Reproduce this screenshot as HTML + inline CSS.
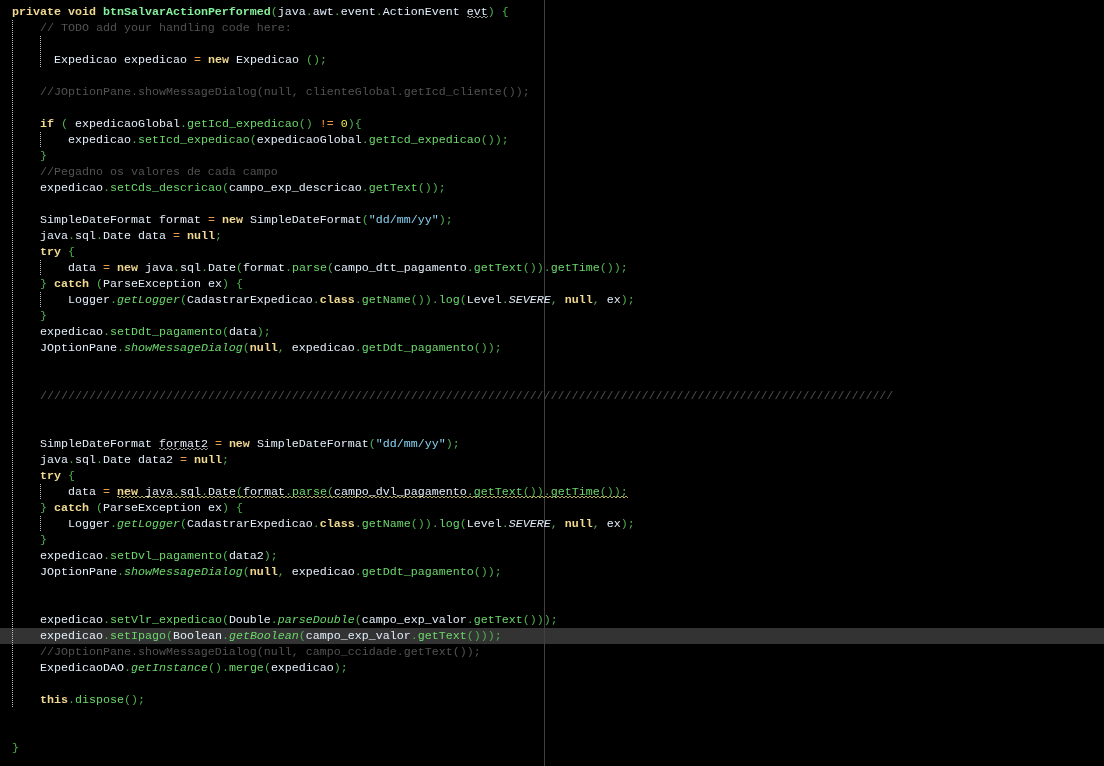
<!DOCTYPE html>
<html><head><meta charset="utf-8">
<style>
html,body{margin:0;padding:0;background:#000;width:1104px;height:766px;overflow:hidden}
#ed{position:absolute;left:0;top:0;width:1104px;height:766px;}
#txt{position:absolute;left:0;top:0;width:1104px;height:766px;will-change:transform}
.l{position:absolute;left:12px;height:16px;line-height:16px;white-space:pre;font-family:"Liberation Mono",monospace;font-size:11.667px;color:#e2eefa}
.k{color:#f0d890;font-weight:bold}
.m{color:#84f09c;font-weight:bold}
.p{color:#4fb04f}
.o{color:#e89a4c}
.i{color:#e2eefa}
.f{color:#6cd86c}
.fi{color:#6cd86c;font-style:italic}
.ii{color:#e2eefa;font-style:italic}
.c{color:#525252}
.s{color:#88d4f4}
.n{color:#eeee50}
#margin{position:absolute;left:544px;top:0;width:1px;height:766px;background:#404040}
#cur{position:absolute;left:0;top:628px;width:1104px;height:16px;background:#333333}
.g{position:absolute;width:1px;background:repeating-linear-gradient(to bottom,#c0c0c0 0,#c0c0c0 1px,transparent 1px,transparent 2px)}
.w{position:absolute;height:2px;background:repeating-linear-gradient(to right,var(--c) 0,var(--c) 2px,transparent 2px,transparent 4px),repeating-linear-gradient(to right,transparent 0,transparent 2px,var(--c) 2px,var(--c) 4px);background-size:100% 1px,100% 1px;background-position:0 0,0 1px;background-repeat:no-repeat}
</style></head><body><div id="ed">
<div id="cur"></div>
<div id="margin"></div>
<div class="g" style="left:12px;top:20px;height:688px"></div>
<div class="g" style="left:40px;top:36px;height:32px"></div>
<div class="g" style="left:40px;top:132px;height:16px"></div>
<div class="g" style="left:40px;top:260px;height:16px"></div>
<div class="g" style="left:40px;top:292px;height:16px"></div>
<div class="g" style="left:40px;top:484px;height:16px"></div>
<div class="g" style="left:40px;top:516px;height:16px"></div>
<div class="w" style="--c:#909090;left:467px;top:16px;width:21px"></div>
<div class="w" style="--c:#909090;left:159px;top:448px;width:49px"></div>
<div class="w" style="--c:#b8b050;left:117px;top:496px;width:511px"></div>
<div id="txt">
<div class="l" style="top:4px"><span class="k">private</span> <span class="k">void</span> <span class="m">btnSalvarActionPerformed</span><span class="p">(</span><span class="i">java</span><span class="p">.</span><span class="i">awt</span><span class="p">.</span><span class="i">event</span><span class="p">.</span><span class="i">ActionEvent</span> <span class="i">evt</span><span class="p">)</span> <span class="p">{</span></div>
<div class="l" style="top:20px">    <span class="c">// TODO add your handling code here:</span></div>
<div class="l" style="top:36px"></div>
<div class="l" style="top:52px">      <span class="i">Expedicao</span> <span class="i">expedicao</span> <span class="o">=</span> <span class="k">new</span> <span class="i">Expedicao</span> <span class="p">(</span><span class="p">)</span><span class="p">;</span></div>
<div class="l" style="top:68px"></div>
<div class="l" style="top:84px">    <span class="c">//JOptionPane.showMessageDialog(null, clienteGlobal.getIcd_cliente());</span></div>
<div class="l" style="top:100px"></div>
<div class="l" style="top:116px">    <span class="k">if</span> <span class="p">(</span> <span class="i">expedicaoGlobal</span><span class="p">.</span><span class="f">getIcd_expedicao</span><span class="p">(</span><span class="p">)</span> <span class="o">!=</span> <span class="n">0</span><span class="p">)</span><span class="p">{</span></div>
<div class="l" style="top:132px">        <span class="i">expedicao</span><span class="p">.</span><span class="f">setIcd_expedicao</span><span class="p">(</span><span class="i">expedicaoGlobal</span><span class="p">.</span><span class="f">getIcd_expedicao</span><span class="p">(</span><span class="p">)</span><span class="p">)</span><span class="p">;</span></div>
<div class="l" style="top:148px">    <span class="p">}</span></div>
<div class="l" style="top:164px">    <span class="c">//Pegadno os valores de cada campo</span></div>
<div class="l" style="top:180px">    <span class="i">expedicao</span><span class="p">.</span><span class="f">setCds_descricao</span><span class="p">(</span><span class="i">campo_exp_descricao</span><span class="p">.</span><span class="f">getText</span><span class="p">(</span><span class="p">)</span><span class="p">)</span><span class="p">;</span></div>
<div class="l" style="top:196px"></div>
<div class="l" style="top:212px">    <span class="i">SimpleDateFormat</span> <span class="i">format</span> <span class="o">=</span> <span class="k">new</span> <span class="i">SimpleDateFormat</span><span class="p">(</span><span class="s">&quot;dd/mm/yy&quot;</span><span class="p">)</span><span class="p">;</span></div>
<div class="l" style="top:228px">    <span class="i">java</span><span class="p">.</span><span class="i">sql</span><span class="p">.</span><span class="i">Date</span> <span class="i">data</span> <span class="o">=</span> <span class="k">null</span><span class="p">;</span></div>
<div class="l" style="top:244px">    <span class="k">try</span> <span class="p">{</span></div>
<div class="l" style="top:260px">        <span class="i">data</span> <span class="o">=</span> <span class="k">new</span> <span class="i">java</span><span class="p">.</span><span class="i">sql</span><span class="p">.</span><span class="i">Date</span><span class="p">(</span><span class="i">format</span><span class="p">.</span><span class="f">parse</span><span class="p">(</span><span class="i">campo_dtt_pagamento</span><span class="p">.</span><span class="f">getText</span><span class="p">(</span><span class="p">)</span><span class="p">)</span><span class="p">.</span><span class="f">getTime</span><span class="p">(</span><span class="p">)</span><span class="p">)</span><span class="p">;</span></div>
<div class="l" style="top:276px">    <span class="p">}</span> <span class="k">catch</span> <span class="p">(</span><span class="i">ParseException</span> <span class="i">ex</span><span class="p">)</span> <span class="p">{</span></div>
<div class="l" style="top:292px">        <span class="i">Logger</span><span class="p">.</span><span class="fi">getLogger</span><span class="p">(</span><span class="i">CadastrarExpedicao</span><span class="p">.</span><span class="k">class</span><span class="p">.</span><span class="f">getName</span><span class="p">(</span><span class="p">)</span><span class="p">)</span><span class="p">.</span><span class="f">log</span><span class="p">(</span><span class="i">Level</span><span class="p">.</span><span class="ii">SEVERE</span><span class="p">,</span> <span class="k">null</span><span class="p">,</span> <span class="i">ex</span><span class="p">)</span><span class="p">;</span></div>
<div class="l" style="top:308px">    <span class="p">}</span></div>
<div class="l" style="top:324px">    <span class="i">expedicao</span><span class="p">.</span><span class="f">setDdt_pagamento</span><span class="p">(</span><span class="i">data</span><span class="p">)</span><span class="p">;</span></div>
<div class="l" style="top:340px">    <span class="i">JOptionPane</span><span class="p">.</span><span class="fi">showMessageDialog</span><span class="p">(</span><span class="k">null</span><span class="p">,</span> <span class="i">expedicao</span><span class="p">.</span><span class="f">getDdt_pagamento</span><span class="p">(</span><span class="p">)</span><span class="p">)</span><span class="p">;</span></div>
<div class="l" style="top:356px"></div>
<div class="l" style="top:372px"></div>
<div class="l" style="top:388px">    <span class="c">//////////////////////////////////////////////////////////////////////////////////////////////////////////////////////////</span></div>
<div class="l" style="top:404px"></div>
<div class="l" style="top:420px"></div>
<div class="l" style="top:436px">    <span class="i">SimpleDateFormat</span> <span class="i">format2</span> <span class="o">=</span> <span class="k">new</span> <span class="i">SimpleDateFormat</span><span class="p">(</span><span class="s">&quot;dd/mm/yy&quot;</span><span class="p">)</span><span class="p">;</span></div>
<div class="l" style="top:452px">    <span class="i">java</span><span class="p">.</span><span class="i">sql</span><span class="p">.</span><span class="i">Date</span> <span class="i">data2</span> <span class="o">=</span> <span class="k">null</span><span class="p">;</span></div>
<div class="l" style="top:468px">    <span class="k">try</span> <span class="p">{</span></div>
<div class="l" style="top:484px">        <span class="i">data</span> <span class="o">=</span> <span class="k">new</span> <span class="i">java</span><span class="p">.</span><span class="i">sql</span><span class="p">.</span><span class="i">Date</span><span class="p">(</span><span class="i">format</span><span class="p">.</span><span class="f">parse</span><span class="p">(</span><span class="i">campo_dvl_pagamento</span><span class="p">.</span><span class="f">getText</span><span class="p">(</span><span class="p">)</span><span class="p">)</span><span class="p">.</span><span class="f">getTime</span><span class="p">(</span><span class="p">)</span><span class="p">)</span><span class="p">;</span></div>
<div class="l" style="top:500px">    <span class="p">}</span> <span class="k">catch</span> <span class="p">(</span><span class="i">ParseException</span> <span class="i">ex</span><span class="p">)</span> <span class="p">{</span></div>
<div class="l" style="top:516px">        <span class="i">Logger</span><span class="p">.</span><span class="fi">getLogger</span><span class="p">(</span><span class="i">CadastrarExpedicao</span><span class="p">.</span><span class="k">class</span><span class="p">.</span><span class="f">getName</span><span class="p">(</span><span class="p">)</span><span class="p">)</span><span class="p">.</span><span class="f">log</span><span class="p">(</span><span class="i">Level</span><span class="p">.</span><span class="ii">SEVERE</span><span class="p">,</span> <span class="k">null</span><span class="p">,</span> <span class="i">ex</span><span class="p">)</span><span class="p">;</span></div>
<div class="l" style="top:532px">    <span class="p">}</span></div>
<div class="l" style="top:548px">    <span class="i">expedicao</span><span class="p">.</span><span class="f">setDvl_pagamento</span><span class="p">(</span><span class="i">data2</span><span class="p">)</span><span class="p">;</span></div>
<div class="l" style="top:564px">    <span class="i">JOptionPane</span><span class="p">.</span><span class="fi">showMessageDialog</span><span class="p">(</span><span class="k">null</span><span class="p">,</span> <span class="i">expedicao</span><span class="p">.</span><span class="f">getDdt_pagamento</span><span class="p">(</span><span class="p">)</span><span class="p">)</span><span class="p">;</span></div>
<div class="l" style="top:580px"></div>
<div class="l" style="top:596px"></div>
<div class="l" style="top:612px">    <span class="i">expedicao</span><span class="p">.</span><span class="f">setVlr_expedicao</span><span class="p">(</span><span class="i">Double</span><span class="p">.</span><span class="fi">parseDouble</span><span class="p">(</span><span class="i">campo_exp_valor</span><span class="p">.</span><span class="f">getText</span><span class="p">(</span><span class="p">)</span><span class="p">)</span><span class="p">)</span><span class="p">;</span></div>
<div class="l" style="top:628px">    <span class="i">expedicao</span><span class="p">.</span><span class="f">setIpago</span><span class="p">(</span><span class="i">Boolean</span><span class="p">.</span><span class="fi">getBoolean</span><span class="p">(</span><span class="i">campo_exp_valor</span><span class="p">.</span><span class="f">getText</span><span class="p">(</span><span class="p">)</span><span class="p">)</span><span class="p">)</span><span class="p">;</span></div>
<div class="l" style="top:644px">    <span class="c">//JOptionPane.showMessageDialog(null, campo_ccidade.getText());</span></div>
<div class="l" style="top:660px">    <span class="i">ExpedicaoDAO</span><span class="p">.</span><span class="fi">getInstance</span><span class="p">(</span><span class="p">)</span><span class="p">.</span><span class="f">merge</span><span class="p">(</span><span class="i">expedicao</span><span class="p">)</span><span class="p">;</span></div>
<div class="l" style="top:676px"></div>
<div class="l" style="top:692px">    <span class="k">this</span><span class="p">.</span><span class="f">dispose</span><span class="p">(</span><span class="p">)</span><span class="p">;</span></div>
<div class="l" style="top:708px"></div>
<div class="l" style="top:724px"></div>
<div class="l" style="top:740px"><span class="p">}</span></div>
</div>
</div></body></html>
